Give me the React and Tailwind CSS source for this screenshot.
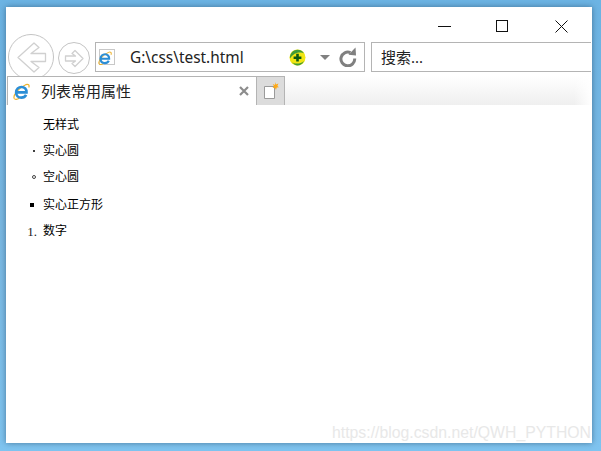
import React from "react";

const cjk = "font-['Noto_Sans','Noto_Sans_CJK_SC',sans-serif]";

const IeLogo = ({ className }) => (
  <svg className={className} viewBox="0 0 18 18">
    <path d="M1.300 16.400C-.2 13.500 5.500 5 13.500 1.800c2.700-1 4.200.2 3.200 3" fill="none" stroke="#eeb32c" strokeWidth="1.300" />
    <path d="M1.300 16.400c1 1.400 3.600.8 5.400-.2" fill="none" stroke="#eeb32c" strokeWidth="1.300" />
    <path d="M4 10h10.300c.2-3.500-2.200-5.800-5.200-5.800-3.200 0-5.700 2.400-5.800 5.800 0 3.400 2.400 5.500 5.500 5.500 2.300 0 4.100-1 5.100-3" fill="none" stroke="#2b8ed6" strokeWidth="2.800" />
  </svg>
);

const ArrowLeft = () => (
  <svg width="46" height="46" viewBox="0 0 46 46" className="shrink-0">
    <circle cx="23" cy="23" r="22.500" fill="#fff" stroke="#c4c4c4" />
    <path d="M10 23.500L26 9l5 4.500-8 6h14.500v8H23l8 6-5 4.500z" fill="#fff" stroke="#d0d0d0" strokeWidth="1.300" strokeLinejoin="round" />
  </svg>
);

const ArrowRight = () => (
  <svg width="32" height="32" viewBox="0 0 32 32" className="shrink-0">
    <circle cx="16" cy="16" r="15.500" fill="#fff" stroke="#c4c4c4" />
    <path d="M25 16.500L17 8.500l-3 3 3.500 2.500H7.500v5h10L14 21.500l3 3z" fill="#fff" stroke="#d0d0d0" strokeWidth="1.300" strokeLinejoin="round" />
  </svg>
);

const Logo360 = () => (
  <svg width="17" height="17" viewBox="0 0 17 17" className="shrink-0">
    <circle cx="8.500" cy="8.500" r="8" fill="#f2e612" />
    <path d="M1 9.500C.4 5 4 .8 8.500.8c3 0 5.400 1.500 6.600 3.800C12 2.600 5 3 1 9.500z" fill="#3f9b3a" />
    <path d="M3 13c2.600 2 8 2.600 12-1-1.400 3-3.800 4.400-6.500 4.400C6.500 16.400 4.300 15 3 13z" fill="#3f9b3a" />
    <path d="M7.200 4.800h2.600v2.600h2.600V10H9.800v2.600H7.200V10H4.600V7.400h2.600z" fill="#0d5a14" />
  </svg>
);

const Refresh = () => (
  <svg width="18" height="20" viewBox="0 0 18 20" className="shrink-0">
    <path d="M11.500 5.600A6.900 6.900 0 1 0 15.700 11.500" fill="none" stroke="#808080" strokeWidth="3" />
    <path d="M9.500 7.800L17 8.500 16.500 .5z" fill="#808080" />
  </svg>
);

const WindowControls = () => (
  <div className="flex h-[27px] items-start justify-end pt-[13px]">
    <svg width="13" height="13" viewBox="0 0 13 13" className="mr-[45px]">
      <path d="M0 6.500h13" stroke="#111" strokeWidth="1" />
    </svg>
    <svg width="12" height="12" viewBox="0 0 12 12" className="mr-[47px]">
      <rect x="0.500" y="0.500" width="11" height="11" fill="none" stroke="#111" strokeWidth="1" />
    </svg>
    <svg width="13" height="13" viewBox="0 0 13 13" className="mr-[24px]">
      <path d="M0.500 0.500l12 12M12.500 0.500l-12 12" stroke="#111" strokeWidth="1" />
    </svg>
  </div>
);

const items = [
  { marker: null, text: "无样式", cls: "mt-[11px]" },
  { marker: <span className="mr-[2px] size-[2px] rounded-full bg-black" />, text: "实心圆", cls: "mt-[8px]" },
  { marker: <span className="mr-[1px] size-[4px] rounded-full border border-[#444]" />, text: "空心圆", cls: "mt-[8px]" },
  { marker: <span className="mr-[3px] size-[4px] bg-black" />, text: "实心正方形", cls: "mt-[10px]" },
  { marker: <span className="font-['Liberation_Serif',serif] text-[13px] leading-none text-[#222]">1.</span>, text: "数字", cls: "mt-[8px]" },
];

export default function App() {
  return (
    <div className="h-[451px] w-[601px] overflow-hidden bg-gradient-to-b from-[#6cb4e4] via-[#7ab8e2] to-[#7fc4f0] pl-[6px] pt-[7px]">
      <div className="relative flex h-[436px] w-[586px] flex-col bg-white shadow-[0_0_6px_rgba(30,60,90,0.55)]">
        <WindowControls />

        {/* toolbar */}
        <div className="flex h-[42px] items-start pl-[2px]">
          <ArrowLeft />
          <div className="ml-[4px] mt-[8px]"><ArrowRight /></div>
          <div className="ml-[5px] mt-[8px] flex h-[30px] w-[270px] items-center border border-[#b4b4b4] pl-[3px]">
            <div className="relative size-[16px] shrink-0 border border-[#c8c8c8] bg-white">
              <IeLogo className="absolute -left-[2px] top-[1px] size-[14px]" />
            </div>
            <span className={`${cjk} ml-[15px] mt-[1px] w-[159px] text-[15.4px] leading-none text-[#222]`}>G:\css\test.html</span>
            <Logo360 />
            <span className="ml-[14px] h-0 w-0 border-x-[5px] border-t-[5px] border-x-transparent border-t-[#808080]" />
            <span className="ml-[9px]"><Refresh /></span>
          </div>
          <div className={`${cjk} ml-[6px] mt-[8px] flex h-[30px] w-[220px] items-center border-y border-l border-[#b4b4b4] pl-[9px] text-[15px] text-[#222]`}>
            搜索...
          </div>
        </div>

        {/* tabs */}
        <div className="flex h-[29px] items-stretch bg-gradient-to-b from-white to-[#efefef]">
          <div className="relative z-10 ml-[1px] flex w-[249px] items-center border-l border-t border-[#b4b4b4] bg-white pl-[5px]">
            <IeLogo className="size-[17px] shrink-0" />
            <span className={`${cjk} ml-[11px] flex-1 text-[15px] leading-none text-[#222]`}>列表常用属性</span>
            <svg width="10" height="10" viewBox="0 0 10 10" className="mr-[7px]">
              <path d="M1 1l8 8M9 1l-8 8" stroke="#8c8c8c" strokeWidth="2.200" />
            </svg>
          </div>
          <div className="relative z-10 flex w-[29px] items-center justify-center border-x border-t border-[#b4b4b4] bg-[#dcdcdc]">
            <svg width="16" height="18" viewBox="0 0 16 18">
              <path d="M1.500 4.500h10v12h-10z" fill="#fff" stroke="#9a9a9a" />
              <path d="M12 0l.9 2.400 2.500-.9-1 2.500 1.600 1.200-2.300.3-.7 2.500-1.100-2.200-2.400.3 1.500-1.800-1.200-2.200 2.200 .9z" fill="#ffa914" />
            </svg>
          </div>
          <div className="ml-auto w-[18px] bg-gradient-to-r from-transparent to-white" />
        </div>

        {/* page body */}
        <div className="flex flex-1 flex-col overflow-hidden">
          {items.map((item) => (
            <div key={item.text} className={`${item.cls} flex h-[18px] items-center`}>
              <span className="flex w-[32px] shrink-0 justify-end pr-[1px]">{item.marker}</span>
              <span className={`${cjk} ml-[5px] text-[12px] leading-none text-black`}>{item.text}</span>
            </div>
          ))}
        </div>

        {/* watermark */}
        <div className="absolute bottom-0 right-0 w-[260px] whitespace-nowrap font-['Liberation_Sans',sans-serif] text-[15.8px] leading-[20px] text-[#e8e8e8]">
          https://blog.csdn.net/QWH_PYTHON
        </div>
      </div>
    </div>
  );
}
